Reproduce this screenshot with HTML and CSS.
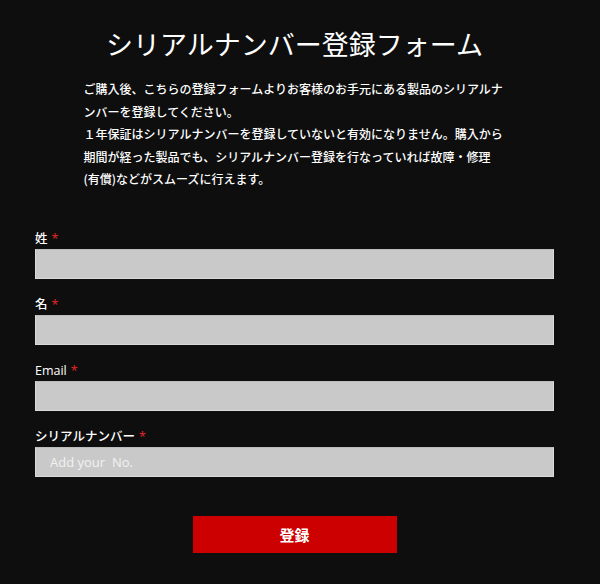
FILE: index.html
```html
<!DOCTYPE html>
<html lang="ja">
<head>
<meta charset="utf-8">
<title>シリアルナンバー登録フォーム</title>
<link rel="stylesheet" href="styles.css">
</head>
<body>
<div class="page">
  <h1 class="title">シリアルナンバー登録フォーム</h1>
  <p class="intro">ご購入後、こちらの登録フォームよりお客様のお手元にある製品のシリアルナンバーを登録してください。<br>１年保証はシリアルナンバーを登録していないと有効になりません。購入から期間が経った製品でも、シリアルナンバー登録を行なっていれば故障・修理(有償)などがスムーズに行えます。</p>
  <form class="form">
    <div class="field">
      <label class="label" for="sei">姓<span class="req">*</span></label>
      <input class="input" id="sei" type="text">
    </div>
    <div class="field">
      <label class="label" for="mei">名<span class="req">*</span></label>
      <input class="input" id="mei" type="text">
    </div>
    <div class="field">
      <label class="label" for="email">Email<span class="req">*</span></label>
      <input class="input" id="email" type="email">
    </div>
    <div class="field">
      <label class="label" for="serial">シリアルナンバー<span class="req">*</span></label>
      <input class="input" id="serial" type="text" placeholder="Add your  No.">
    </div>
    <div class="actions">
      <button class="submit" type="button">登録</button>
    </div>
  </form>
</div>
</body>
</html>
```
FILE: styles.css
```css
html, body {
  margin: 0;
  padding: 0;
}
body {
  background: #0e0e0e;
  color: #ffffff;
  font-family: "Open Sans", "Noto Sans CJK JP", sans-serif;
}
.page {
  width: 519px;
  padding: 24px 0 0 35px;
}
.title {
  margin: 0;
  font-family: "Noto Sans CJK JP", sans-serif;
  font-size: 27px;
  font-weight: 400;
  line-height: 40px;
  text-align: center;
}
.intro {
  width: 422px;
  margin: 14px auto 0;
  font-family: "Noto Sans CJK JP", sans-serif;
  font-size: 12px;
  font-weight: 500;
  line-height: 22.5px;
}
.form {
  margin-top: 39px;
}
.field {
  display: flex;
  flex-direction: column;
  margin-bottom: 17px;
}
.label {
  font-size: 12.5px;
  font-weight: 500;
  line-height: 18px;
  margin-bottom: 1px;
}
.req {
  color: #e5262b;
  margin-left: 4px;
  font-weight: 400;
}
.input {
  box-sizing: border-box;
  height: 30px;
  margin: 0;
  padding: 0 14px;
  border: 1px solid #d9d9d9;
  border-top-color: #bcbcbc;
  background: #c9c9c9;
  font-family: "Open Sans", sans-serif;
  font-size: 13px;
  color: #333;
  outline: none;
}
.input::placeholder {
  color: #f2f2f2;
  opacity: 1;
}
.actions {
  display: flex;
  justify-content: center;
  padding-top: 22px;
}
.submit {
  width: 204px;
  height: 37px;
  border: 0;
  background: #cc0000;
  color: #ffffff;
  font-family: "Noto Sans CJK JP", sans-serif;
  font-size: 15px;
  font-weight: 700;
  cursor: pointer;
}
```
